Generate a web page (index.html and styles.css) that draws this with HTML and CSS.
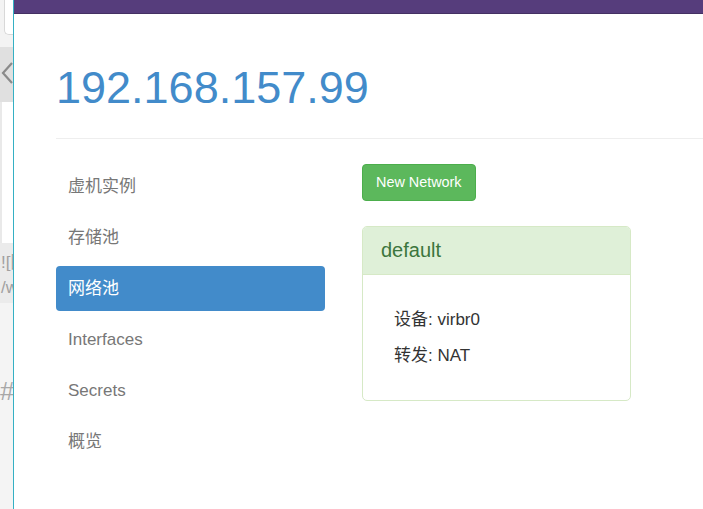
FILE: index.html
```html
<!DOCTYPE html>
<html lang="zh-CN">
<head>
  <meta charset="UTF-8">
  <meta name="viewport" content="width=device-width, initial-scale=1.0">
  <title>192.168.157.99</title>
  <link rel="stylesheet" href="styles.css">
</head>
<body>
  <!-- window behind, peeking out on the left -->
  <div class="backdrop">
    <div class="bd-top"><div class="bd-input"></div></div>
    <div class="bd-tab">
      <svg width="12" height="24" viewBox="0 0 12 24"><path d="M11 2 L2 12 L11 22" fill="none" stroke="#8a8a8a" stroke-width="2.2"/></svg>
    </div>
    <div class="bd-editor"><div class="bd-paper"></div></div>
    <div class="bd-code">![图片<br>/wiki</div>
    <div class="bd-rest"><span class="bd-hash">#</span></div>
  </div>

  <div class="window">
    <div class="navbar"></div>
    <div class="container">
      <div class="page-header">
        <h1>192.168.157.99</h1>
      </div>

      <div class="row">
        <ul class="nav-pills">
          <li><a href="#">虚机实例</a></li>
          <li><a href="#">存储池</a></li>
          <li class="active"><a href="#">网络池</a></li>
          <li><a href="#">Interfaces</a></li>
          <li><a href="#">Secrets</a></li>
          <li><a href="#">概览</a></li>
        </ul>

        <div class="main">
          <button class="btn btn-success">New Network</button>

          <div class="panel">
            <div class="panel-heading">default</div>
            <div class="panel-body">
              <p>设备: virbr0</p>
              <p>转发: NAT</p>
            </div>
          </div>
        </div>
      </div>
    </div>
  </div>
</body>
</html>
```

FILE: styles.css
```css
* {
  box-sizing: border-box;
}

html, body {
  height: 100%;
}

body {
  margin: 0;
  display: flex;
  overflow: hidden;
  font-family: "Liberation Sans", "Noto Sans CJK SC", sans-serif;
  font-size: 17px;
  color: #333;
  background-color: #fff;
}

/* left strip: another window behind */
.backdrop {
  width: 14px;
  flex-shrink: 0;
  display: flex;
  flex-direction: column;
  border-right: 1px solid #35b0c4;
  overflow: hidden;
  background-color: #f3f3f3;
}

.bd-top {
  height: 47px;
  padding-left: 4px;
}

.bd-input {
  height: 35px;
  background-color: #fff;
  border: 1px solid #d8d8d8;
  border-top: none;
  border-right: none;
  border-bottom-left-radius: 5px;
}

.bd-tab {
  height: 55px;
  background-color: #e0e0e0;
  padding: 14px 0 0 1px;
}

.bd-tab svg {
  display: block;
}

.bd-editor {
  height: 141px;
  background-color: #e9e9e9;
  padding-left: 2px;
}

.bd-paper {
  height: 100%;
  background-color: #fff;
}

.bd-code {
  height: 60px;
  background-color: #ebebeb;
  color: #a0a0a0;
  font-size: 17px;
  line-height: 25px;
  padding: 7px 0 0 1px;
  white-space: nowrap;
}

.bd-rest {
  flex: 1;
  padding-top: 73px;
  background-color: #f4f4f4;
}

.bd-hash {
  color: #a8a8a8;
  font-size: 26px;
  line-height: 30px;
}

/* main page */
.window {
  flex: 1;
  overflow: hidden;
}

.navbar {
  height: 14px;
  background-color: #563d7c;
  border-bottom: 1px solid #443063;
}

.container {
  width: 1000px;
  padding-left: 42px;
}

.page-header {
  margin: 49px 0 25px;
  padding-bottom: 26px;
  border-bottom: 1px solid #eee;
}

.page-header h1 {
  margin: 0;
  font-size: 45px;
  font-weight: normal;
  line-height: 49px;
  color: #428bca;
}

.row {
  display: flex;
  gap: 37px;
}

.nav-pills {
  width: 269px;
  margin: 0;
  padding: 0;
  list-style: none;
}

.nav-pills li + li {
  margin-top: 6px;
}

.nav-pills a {
  display: block;
  padding: 10.5px 12px;
  line-height: 24px;
  color: #777;
  text-decoration: none;
  border-radius: 4px;
}

.nav-pills .active a {
  background-color: #428bca;
  color: #fff;
}

.main {
  width: 269px;
}

.btn {
  font-family: inherit;
  font-size: 14.4px;
  line-height: 21px;
  padding: 7px 13px;
  border-radius: 4px;
  cursor: pointer;
}

.btn-success {
  background-color: #5cb85c;
  border: 1px solid #4cae4c;
  color: #fff;
}

.panel {
  margin-top: 25px;
  border: 1px solid #d6e9c6;
  border-radius: 5px;
  overflow: hidden;
}

.panel-heading {
  padding: 12px 18px;
  line-height: 23px;
  font-size: 20px;
  color: #3c763d;
  background-color: #dff0d8;
  border-bottom: 1px solid #d6e9c6;
}

.panel-body {
  padding: 33px 31px 32px;
}

.panel-body p {
  margin: 0;
  line-height: 24px;
}

.panel-body p + p {
  margin-top: 12px;
}
```
